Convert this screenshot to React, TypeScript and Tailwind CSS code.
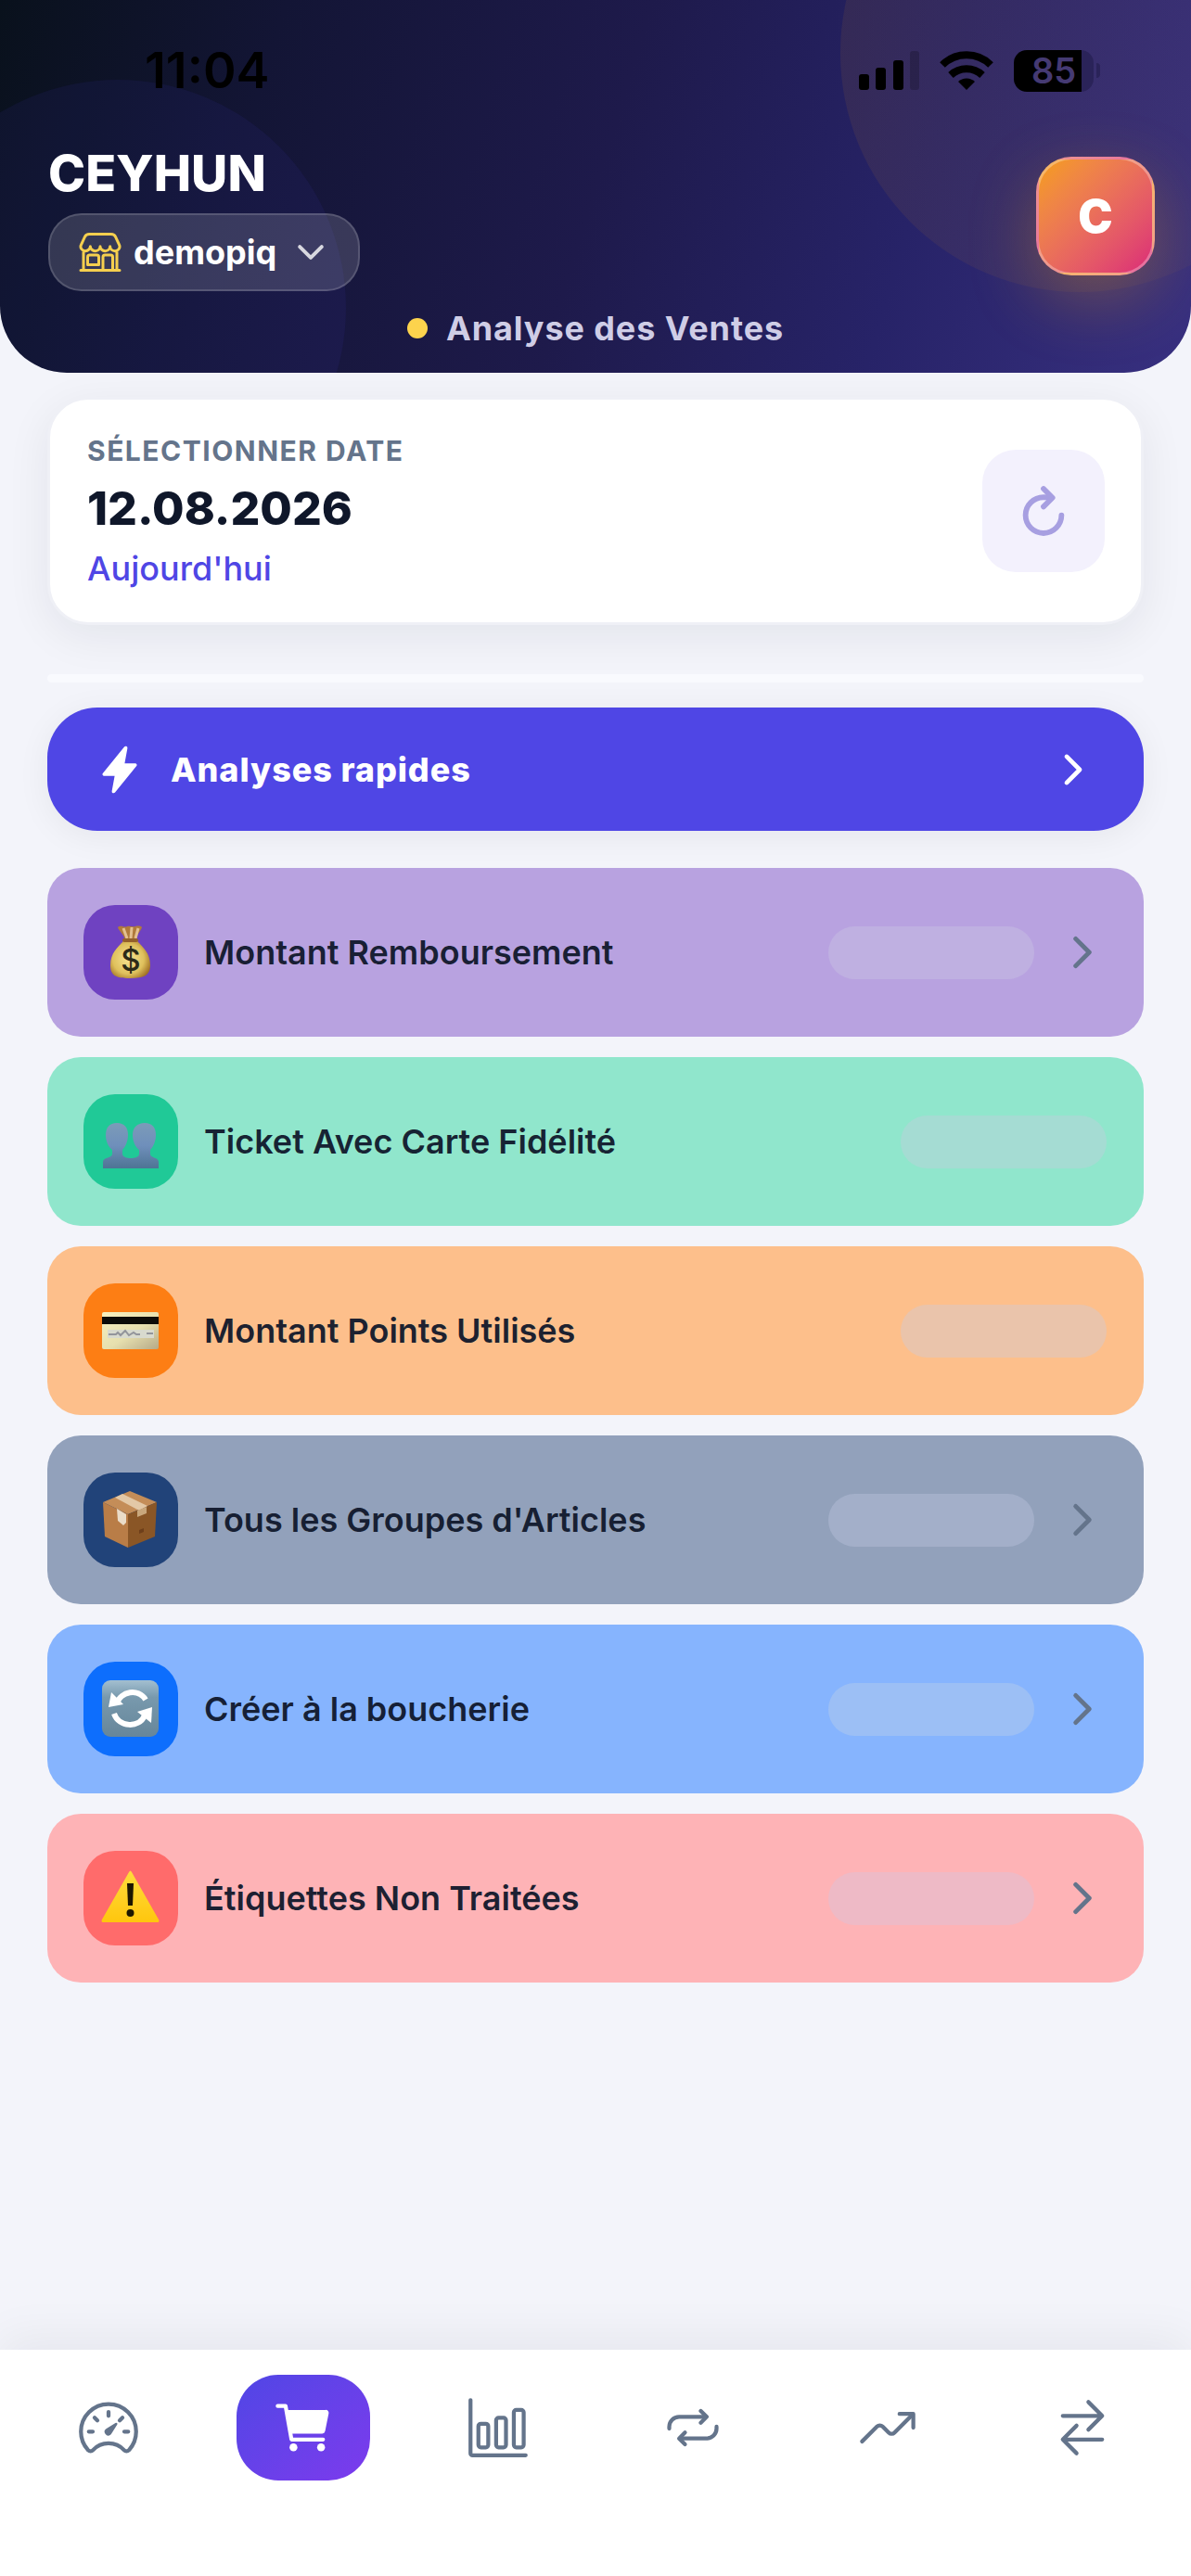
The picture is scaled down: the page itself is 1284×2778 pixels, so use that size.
import type { ComponentType, ReactNode } from "react";
import {
	IoBarChartOutline,
	IoCart,
	IoChevronDown,
	IoChevronForward,
	IoFlash,
	IoRefresh,
	IoRepeatOutline,
	IoSpeedometerOutline,
	IoStorefrontOutline,
	IoSwapHorizontal,
	IoTrendingUp,
} from "react-icons/io5";

const MoneyBagIcon = () => (
	<svg viewBox="0 0 64 64" className="size-16" aria-hidden="true">
		<defs>
			<radialGradient id="bag" cx="0.45" cy="0.5" r="0.6">
				<stop offset="0" stopColor="#f6e292" />
				<stop offset="0.65" stopColor="#dfc05c" />
				<stop offset="1" stopColor="#a07024" />
			</radialGradient>
		</defs>
		<path d="M18 5c4-3 7 1 10-1 3-1 6 1 9 0 3-1 7 0 7 1-1 4-6 8-7 14H26C25 13 19 9 18 5z" fill="#b07a3c" />
		<path d="M24 6l4 11M33 5l-1 12M40 6l-3 11" stroke="#e3bf90" strokeWidth="3" />
		<path d="M25 18h13c3 6 15 12 15 28 0 11-7 14-22 14s-21-3-21-14c0-16 12-22 15-28z" fill="url(#bag)" />
		<rect x="23" y="17" width="17" height="4" rx="2" fill="#94602a" />
		<text
			x="32"
			y="52"
			textAnchor="middle"
			fontSize="33"
			fontWeight="500"
			fontFamily="Inter, sans-serif"
			fill="#2c2a18"
		>
			$
		</text>
	</svg>
);

const PeopleIcon = () => (
	<svg viewBox="0 0 64 64" className="size-16" aria-hidden="true">
		<defs>
			<linearGradient id="people" x1="0" y1="0" x2="0" y2="1">
				<stop offset="0" stopColor="#7c9bb8" />
				<stop offset="0.5" stopColor="#6f8fbb" />
				<stop offset="1" stopColor="#4e7494" />
			</linearGradient>
		</defs>
		<path
			d="M17 12c8 0 12 5 12 13 0 7-3 13-6 16v5c1 3 5 4 9 4s8-1 9-4v-5c-4-3-7-9-7-16 0-8 5-13 13-13s12 5 12 13c0 7-3 13-6 16v5c1 4 9 3 9 8v7H2v-7c0-5 9-4 10-8v-5c-4-3-7-9-7-16 0-8 4-13 12-13z"
			fill="url(#people)"
		/>
	</svg>
);

const CreditCardIcon = () => (
	<svg viewBox="0 0 64 64" className="size-16" aria-hidden="true">
		<defs>
			<linearGradient id="card" x1="0" y1="0" x2="1" y2="1">
				<stop offset="0" stopColor="#f8f1bf" />
				<stop offset="0.55" stopColor="#e6dfae" />
				<stop offset="1" stopColor="#b5a988" />
			</linearGradient>
		</defs>
		<rect x="1" y="12" width="61" height="40" rx="2" fill="url(#card)" />
		<rect x="1" y="17" width="61" height="8" fill="#0c0c08" />
		<rect x="7" y="31" width="50" height="9" fill="#d8dace" />
		<path d="M8 36h8l2-2 3 3 5-5 4 5 5-3 3 2h4M49 35h7" stroke="#93959b" strokeWidth="2" fill="none" />
	</svg>
);

const PackageIcon = () => (
	<svg viewBox="0 0 64 64" className="size-16" aria-hidden="true">
		<path d="M2 13L31 1l29 12-31 13z" fill="#c48d58" />
		<path d="M2 13l27 13v36L4 50z" fill="#b97d47" />
		<path d="M60 13L29 26v36l29-12z" fill="#8a5626" />
		<path d="M15 8l8-4 27 13-9 5z" fill="#e3c8a6" />
		<path d="M39 22l10-4v7l-10 4z" fill="#c9a77c" />
		<path d="M17 20l10 6v9l-3 3-6-5z" fill="#eadcc8" />
		<path d="M41 43l5-2v4l-5 2z" fill="#6e3f1a" />
	</svg>
);

const SyncIcon = () => (
	<svg viewBox="0 0 64 64" className="size-16" aria-hidden="true">
		<defs>
			<linearGradient id="sync" x1="0" y1="0" x2="0" y2="1">
				<stop offset="0" stopColor="#a3bfd0" />
				<stop offset="0.3" stopColor="#7899ad" />
				<stop offset="1" stopColor="#66869a" />
			</linearGradient>
		</defs>
		<rect x="1" y="1" width="61" height="61" rx="9" fill="url(#sync)" />
		<g fill="none" stroke="#fff" strokeWidth="6">
			<path d="M17 26c4-13 23-17 31-4" />
			<path d="M14 37c5 15 27 16 33 2" />
		</g>
		<path d="M11 14L8 30l16-3z" fill="#fff" />
		<path d="M55 30L39 35l15 12z" fill="#fff" />
	</svg>
);

const WarningIcon = () => (
	<svg viewBox="0 0 64 64" className="size-16" aria-hidden="true">
		<defs>
			<linearGradient id="warning" x1="0" y1="0" x2="0" y2="1">
				<stop offset="0" stopColor="#ffdc3c" />
				<stop offset="1" stopColor="#ffc60e" />
			</linearGradient>
		</defs>
		<path d="M30 4c1-2 2-2 3 0l29 51c1 2 0 3-1 3H2c-1 0-2-1-1-3z" fill="url(#warning)" />
		<path d="M28 16h7l-1 24h-5z" fill="#1c1600" />
		<circle cx="31.5" cy="48" r="4" fill="#1c1600" />
	</svg>
);

type Analysis = {
	label: string;
	icon: ReactNode;
	row: string;
	tile: string;
	placeholder: string;
	link: boolean;
};

const analyses: Analysis[] = [
	{
		label: "Montant Remboursement",
		icon: <MoneyBagIcon />,
		row: "bg-[#b8a2e0]",
		tile: "bg-[#6f42c1]",
		placeholder: "bg-[#bfb0e1]",
		link: true,
	},
	{
		label: "Ticket Avec Carte Fidélité",
		icon: <PeopleIcon />,
		row: "bg-[#90e6cc]",
		tile: "bg-[#20c997]",
		placeholder: "bg-[#a5dcd3]",
		link: false,
	},
	{
		label: "Montant Points Utilisés",
		icon: <CreditCardIcon />,
		row: "bg-[#fdbf8b]",
		tile: "bg-[#fd7e14]",
		placeholder: "bg-[#eac4ab]",
		link: false,
	},
	{
		label: "Tous les Groupes d'Articles",
		icon: <PackageIcon />,
		row: "bg-[#92a1bb]",
		tile: "bg-[#214379]",
		placeholder: "bg-[#a3afc9]",
		link: true,
	},
	{
		label: "Créer à la boucherie",
		icon: <SyncIcon />,
		row: "bg-[#86b4fe]",
		tile: "bg-[#0d6efd]",
		placeholder: "bg-[#9cbff5]",
		link: true,
	},
	{
		label: "Étiquettes Non Traitées",
		icon: <WarningIcon />,
		row: "bg-[#feb3b6]",
		tile: "bg-[#ff6b6b]",
		placeholder: "bg-[#eebac6]",
		link: true,
	},
];

type Tab = { name: string; Icon: ComponentType<{ className?: string }>; active?: boolean };

const tabs: Tab[] = [
	{ name: "Tableau de bord", Icon: IoSpeedometerOutline },
	{ name: "Ventes", Icon: IoCart, active: true },
	{ name: "Statistiques", Icon: IoBarChartOutline },
	{ name: "Rotation", Icon: IoRepeatOutline },
	{ name: "Tendances", Icon: IoTrendingUp },
	{ name: "Transferts", Icon: IoSwapHorizontal },
];

const StatusBar = () => (
	<div className="flex items-center justify-between pt-11 pr-[98px] pl-[156px]">
		<span className="text-[54px] leading-[64px] font-semibold text-black">11:04</span>
		<div className="flex items-center gap-[22px]">
			<svg viewBox="0 0 65 42" className="h-[42px] w-[65px]" aria-hidden="true">
				<rect x="0" y="25" width="11" height="17" rx="3" />
				<rect x="18" y="18" width="11" height="24" rx="3" />
				<rect x="37" y="10" width="11" height="32" rx="3" />
				<rect x="55" y="0" width="10" height="42" rx="3" opacity="0.2" />
			</svg>
			<svg viewBox="0 0 58 42" className="h-[42px] w-[58px]" aria-hidden="true">
				<g fill="none" stroke="#000" strokeWidth="8">
					<path d="M3 15a37 37 0 0 1 52 0" />
					<path d="M12 26a25 25 0 0 1 34 0" />
				</g>
				<path d="M20 33a13 13 0 0 1 18 0l-9 9z" />
			</svg>
			<div className="flex items-center gap-[3px]">
				<div className="flex h-[45px] w-[86px] items-center justify-center rounded-[14px] bg-linear-to-r from-black from-85% to-[#2a2359] to-85% text-[38px] leading-none font-semibold text-[#453a73]">
					85
				</div>
				<div className="h-4 w-1 rounded-r bg-[#2a2359]" />
			</div>
		</div>
	</div>
);

const Header = () => (
	<header className="relative overflow-hidden rounded-b-[72px] bg-[linear-gradient(107deg,#09111c_0%,#131535_22%,#1e1a4b_50%,#272368_75%,#383080_100%)]">
		<div className="absolute -top-[201px] -right-[138px] size-[516px] rounded-full bg-linear-to-r from-[#f59e0b]/8 to-[#f59e0b]/2" />
		<div className="absolute top-[86px] -left-[119px] size-[492px] rounded-full bg-[#4f46e5]/8" />
		<div className="relative">
			<StatusBar />
			<div className="flex items-center justify-between pt-11 pr-[39px] pl-[52px]">
				<div className="flex flex-col items-start gap-2">
					<h1 className="text-[54px] leading-[70px] font-extrabold text-white">CEYHUN</h1>
					<button
						type="button"
						className="flex h-[84px] items-center rounded-[36px] border-2 border-white/15 bg-white/15 px-[30px] text-white"
					>
						<IoStorefrontOutline className="size-12 text-[#f5cf4e]" />
						<span className="ml-3 text-[36px] leading-[48px] font-bold">demopiq</span>
						<IoChevronDown className="ml-4 size-[42px] text-white/80" />
					</button>
				</div>
				<button
					type="button"
					className="flex size-32 items-center justify-center rounded-[38px] border-3 border-white/30 bg-linear-to-br from-[#f59e0b] to-[#db2777] text-[50px] font-black text-white shadow-[0_24px_72px_rgba(245,158,11,0.3)]"
				>
					C
				</button>
			</div>
			<div className="flex items-center justify-center gap-5 pt-4 pb-6">
				<span className="size-[22px] rounded-full bg-[#fcd34d]" />
				<p className="text-[36px] leading-[48px] font-bold tracking-wide text-[#cfcde6]">Analyse des Ventes</p>
			</div>
		</div>
	</header>
);

const DateCard = () => (
	<section className="flex items-center justify-between rounded-[44px] border-3 border-[#eff0f6] bg-white py-[33px] pr-[39px] pl-10 shadow-[0_12px_48px_rgba(15,23,42,0.07)]">
		<div>
			<p className="text-[30px] leading-[44px] font-bold tracking-wider text-[#64748b]">SÉLECTIONNER DATE</p>
			<p className="text-[50px] leading-[80px] font-extrabold text-[#0f172a]">12.08.2026</p>
			<p className="text-[36px] leading-[50px] font-medium text-[#4f46e5]">Aujourd'hui</p>
		</div>
		<button
			type="button"
			aria-label="Actualiser"
			className="flex size-[132px] items-center justify-center rounded-[36px] bg-[#f3f1fd] text-[#a79fe1]"
		>
			<IoRefresh className="size-[62px] [&_path]:stroke-[48px]" />
		</button>
	</section>
);

const AnalysisRow = ({ label, icon, row, tile, placeholder, link }: Analysis) => (
	<li>
		<button
			type="button"
			className={`flex h-[182px] w-full items-center rounded-[36px] pr-10 pl-[39px] text-left ${row}`}
		>
			<span className={`flex size-[102px] shrink-0 items-center justify-center rounded-[34px] ${tile}`}>{icon}</span>
			<span className="ml-7 flex-1 text-[36px] leading-[48px] font-semibold text-[#0f172a]/95">{label}</span>
			<span className={`h-[57px] w-[222px] rounded-full ${placeholder}`} />
			{link && <IoChevronForward className="ml-[26px] size-[52px] text-[#64748b]" />}
		</button>
	</li>
);

const TabBar = () => (
	<nav className="flex h-[244px] items-start bg-white px-3 pt-[27px] shadow-[0_-12px_48px_rgba(15,23,42,0.06)]">
		{tabs.map(({ name, Icon, active }) => (
			<div key={name} className="flex flex-1 justify-center">
				<button
					type="button"
					aria-label={name}
					className={
						active
							? "flex h-[114px] w-36 items-center justify-center rounded-[45px] bg-linear-to-br from-[#4f46e5] to-[#7c3aed] text-white"
							: "flex h-[114px] w-36 items-center justify-center text-[#64748b]"
					}
				>
					<Icon className="size-[68px]" />
				</button>
			</div>
		))}
	</nav>
);

export default function App() {
	return (
		<div className="flex min-h-screen flex-col bg-[#f3f4fa] font-[Inter,sans-serif]">
			<Header />
			<main className="flex flex-1 flex-col px-[51px] pt-[26px]">
				<DateCard />
				<div className="mt-[53px] h-[9px] rounded-full bg-[#f9fafe]" />
				<button
					type="button"
					className="mt-[27px] flex h-[133px] items-center rounded-[54px] bg-[#4f46e5] px-[51px] text-white shadow-[0_6px_36px_rgba(15,23,42,0.06)]"
				>
					<IoFlash className="size-[54px]" />
					<span className="ml-7 flex-1 text-left text-[36px] leading-[48px] font-extrabold tracking-wide">
						Analyses rapides
					</span>
					<IoChevronForward className="size-[50px]" />
				</button>
				<ul className="mt-10 flex flex-col gap-[22px]">
					{analyses.map((analysis) => (
						<AnalysisRow key={analysis.label} {...analysis} />
					))}
				</ul>
			</main>
			<TabBar />
		</div>
	);
}
